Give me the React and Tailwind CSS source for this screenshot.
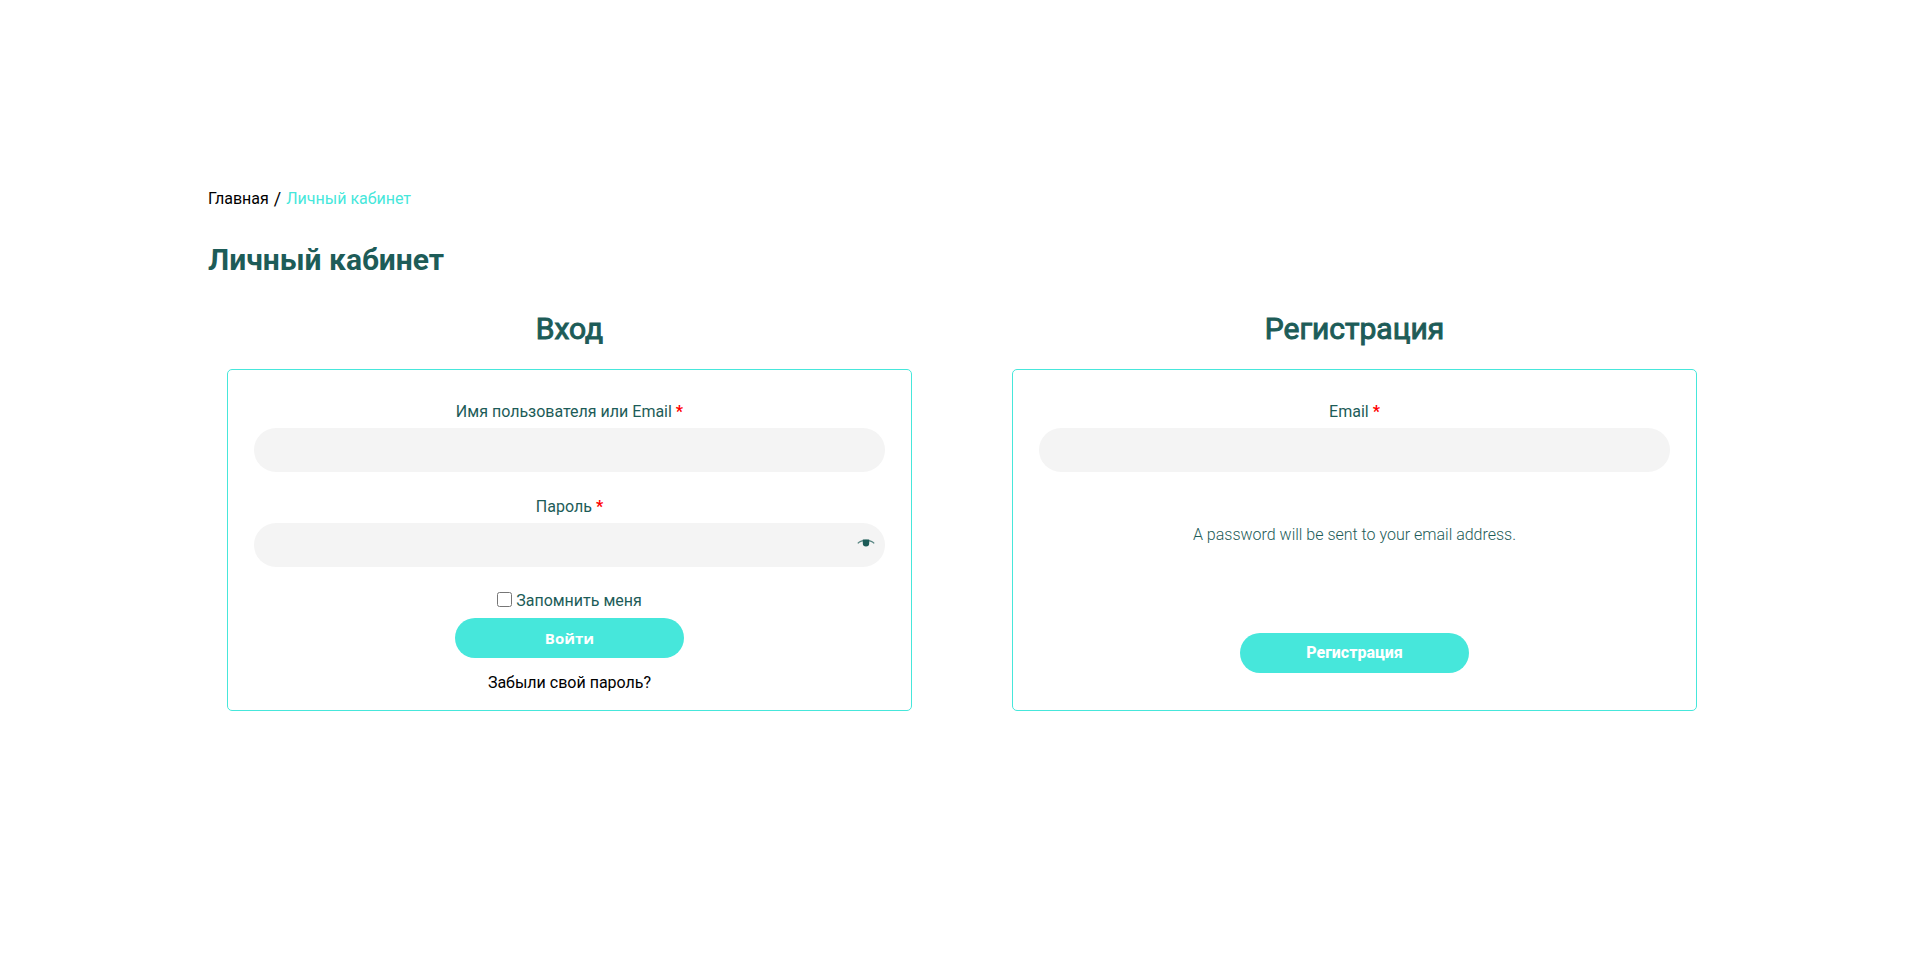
function Required() {
  return <span className="font-bold text-[#ff0000]">*</span>;
}

function EyeIcon() {
  return (
    <svg width="18" height="8" viewBox="0 0 18 8" fill="none">
      <path d="M0.8 4.4C4.8 0.4 13.2 0.4 17.2 4.4" stroke="#1d5c58" strokeOpacity="0.75" strokeWidth="1.3" />
      <path d="M5.8 0.6h6.4v3.6a3.2 3.2 0 0 1-6.4 0z" fill="#1d5c58" />
    </svg>
  );
}

function Field({ id, label, type, children }) {
  return (
    <div className="flex flex-col items-center gap-1">
      <label htmlFor={id}>
        {label} <Required />
      </label>
      <div className="relative w-full">
        <input id={id} type={type} className="block h-11 w-full rounded-full bg-[#f4f4f4] px-5 outline-none" />
        {children}
      </div>
    </div>
  );
}

export default function App() {
  return (
    <main className="bg-white pt-[187px] pr-[205px] pl-[208px] pb-20 font-['Roboto',sans-serif] text-base leading-6 text-[#1d5c58]">
      {/* BREADCRUMBS */}
      <nav className="flex gap-[5px] text-black">
        <a href="#">Главная</a>
        <span className="text-lg leading-6">/</span>
        <a href="#" className="text-[#46e7db]">Личный кабинет</a>
      </nav>

      <h1 className="mt-[31px] text-3xl leading-9 font-bold">Личный кабинет</h1>

      <div className="mt-[33px] grid grid-cols-2 gap-[100px] pr-[18px] pl-[19px]">
        {/* LOGIN */}
        <section className="flex flex-col">
          <h2 className="text-center text-3xl leading-9 font-normal [-webkit-text-stroke:1px_#1d5c58]">Вход</h2>
          <form className="mt-[22px] flex flex-1 flex-col items-center rounded-[5px] border border-[#46e7db] px-[26px] pt-[30px] pb-[15px]">
            <div className="flex w-full flex-col gap-[23px]">
              <Field id="username" label="Имя пользователя или Email" type="text" />
              <Field id="password" label="Пароль" type="password">
                <button type="button" aria-label="Показать пароль" className="absolute top-4 right-[10px]">
                  <EyeIcon />
                </button>
              </Field>
            </div>
            <label className="mt-[22px] flex items-start gap-1">
              <input type="checkbox" className="mt-[3px] size-[15px]" />
              Запомнить меня
            </label>
            <button type="button" className="mt-[5px] h-10 w-[229px] rounded-full bg-[#46e7db] font-['Open_Sans',sans-serif] text-[15px] font-bold text-white">
              Войти
            </button>
            <a href="#" className="mt-[13px] text-black">Забыли свой пароль?</a>
          </form>
        </section>

        {/* REGISTER */}
        <section className="flex flex-col">
          <h2 className="text-center text-3xl leading-9 font-normal [-webkit-text-stroke:1px_#1d5c58]">Регистрация</h2>
          <form className="mt-[22px] flex flex-1 flex-col items-center rounded-[5px] border border-[#46e7db] px-[26px] pt-[30px] pb-[37px]">
            <div className="w-full">
              <Field id="email" label="Email" type="email" />
            </div>
            <p className="mt-[51px] font-light">A password will be sent to your email address.</p>
            <button type="button" className="mt-auto h-10 w-[229px] rounded-full bg-[#46e7db] font-extrabold text-white">
              Регистрация
            </button>
          </form>
        </section>
      </div>
    </main>
  );
}
